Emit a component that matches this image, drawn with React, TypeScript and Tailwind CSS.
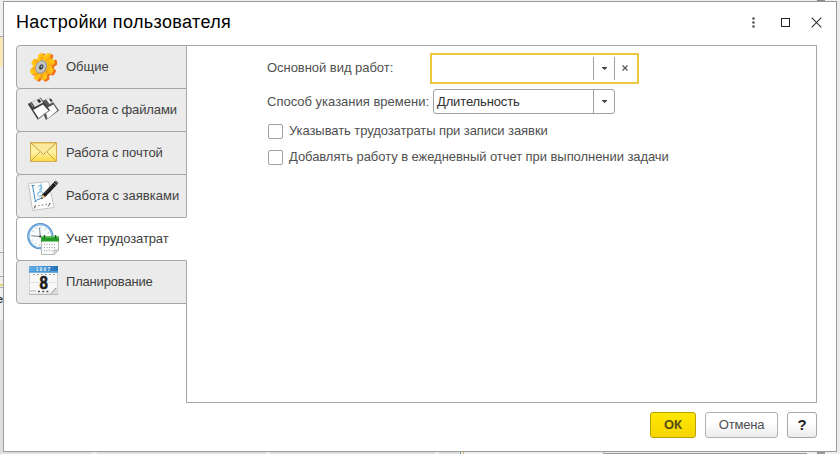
import type { ReactNode } from "react";

const GEAR_TEETH = [0, 45, 90, 135, 180, 225, 270, 315];

function GearIcon() {
  return (
    <svg width="32" height="34" viewBox="0 0 32 34">
      <defs>
        <linearGradient id="gear" x1="0" y1="0" x2="1" y2="1">
          <stop offset="0" stopColor="#ffd51c" />
          <stop offset="0.6" stopColor="#fdb913" />
          <stop offset="1" stopColor="#f68a1e" />
        </linearGradient>
      </defs>
      <g transform="translate(17.6 17.6) rotate(28) scale(0.82 1.05)" fill="#f0701c">
        <circle r="11.2" />
        {GEAR_TEETH.map((a) => (
          <rect key={a} x="-3.1" y="-14.4" width="6.2" height="7" rx="1.6" transform={`rotate(${a})`} />
        ))}
      </g>
      <g transform="translate(15.4 16.6) rotate(28) scale(0.82 1.05)" fill="url(#gear)">
        <circle r="11.4" />
        {GEAR_TEETH.map((a) => (
          <rect key={a} x="-3" y="-14" width="6" height="7" rx="1.6" transform={`rotate(${a})`} />
        ))}
      </g>
      <ellipse cx="14.2" cy="17" rx="5.6" ry="7.2" transform="rotate(28 14.2 17)" fill="#9b9c98" />
      <ellipse cx="13.8" cy="16.8" rx="4.6" ry="6.1" transform="rotate(28 13.8 16.8)" fill="#c3c4c0" />
      <ellipse cx="14.2" cy="17" rx="2" ry="2.8" transform="rotate(28 14.2 17)" fill="#444b50" />
      <circle cx="14.6" cy="16.5" r="0.7" fill="#b8d0dd" />
    </svg>
  );
}

function FloppyIcon() {
  return (
    <svg width="32" height="34" viewBox="0 0 32 34">
      <path d="M11 10 23 4.5 32 17.5 19 27Z" fill="#57585a" />
      <path d="M19 6.2 24 4.2 27 8.5 22.5 11Z" fill="#f4f4f4" />
      <path d="M22 6.3 24 5.4 25.7 8.2 24 9Z" fill="#333" />
      <path d="M18 16 26.5 11.5 30.4 17.6 20.5 25.8Z" fill="#fafafa" />
      <path d="M0.8 11 13.5 4.4 23 17.3 10.8 26.8Z" fill="#3d3e40" />
      <path d="M4.7 9 12.8 4.8 16.2 9.5 7.8 14Z" fill="#e3e3e3" />
      <path d="M10 7.2 12.2 6 14.2 8.8 12 10Z" fill="#292929" />
      <path d="M6.2 17 16 11.6 21.6 17.8 11.8 25.2Z" fill="#fff" />
      <path d="m3.8 10.2 2.5 4M11 25.8 22 17.4" stroke="#97989a" fill="none" />
    </svg>
  );
}

function MailIcon() {
  return (
    <svg width="32" height="34" viewBox="0 0 32 34">
      <defs>
        <linearGradient id="mail" x1="0" y1="0" x2="0" y2="1">
          <stop offset="0" stopColor="#fbe78a" />
          <stop offset="0.5" stopColor="#fff2a5" />
          <stop offset="1" stopColor="#f9d93f" />
        </linearGradient>
      </defs>
      <rect x="3.5" y="6.5" width="26" height="19" fill="url(#mail)" stroke="#d3ac55" />
      <path d="M4 25 13.5 15.5M29 25 19.5 15.5" stroke="#cfa652" fill="none" />
      <path d="M4 7 16.5 18.5 29 7" fill="#fcea9c" stroke="#c69c48" />
      <path d="M5 7.5H28" stroke="#efd06d" />
    </svg>
  );
}

function DocumentIcon() {
  return (
    <svg width="32" height="34" viewBox="0 0 32 34">
      <path d="M1.5 4.5 21.5 2.5 27 28.5 5.5 31.5Z" fill="#fdfdfd" stroke="#c3c5c7" />
      <path d="M5.5 6.5 8.5 22.5M4.5 6.5h3M7.5 22.5 10 22M10 21l5-2" stroke="#3c8bc7" fill="none" />
      <path d="M14 4.5v8M11 7.5c4-3 6 3 1 3M11 14.5c3-4 8 0 3 2.5-4 1-5-3-1-4.5" stroke="#69b2df" fill="none" />
      <path d="m7.5 27.5 16-3" stroke="#777" strokeDasharray="1.5 2.2" fill="none" />
      <path d="m7.5 29.5.8-3M21 27.5l2-3" stroke="#555" />
      <path d="m14.5 19.5.8-4L28.5 1.5l3 2.5L18.5 17.8Z" fill="#191919" />
      <path d="m14.5 20 1-4.5 3 2.5Z" fill="#ecc486" />
      <path d="m14.3 20.3.5-2.1 1.1 1Z" fill="#151515" />
      <path d="m26.6 3.7 3 2.5M28 2.3l3 2.5" stroke="#b9b9b9" strokeWidth="0.8" />
      <path d="m18 14.5 8-8.5" stroke="#747474" strokeWidth="0.6" />
    </svg>
  );
}

function ClockIcon() {
  return (
    <svg width="32" height="34" viewBox="0 0 32 34">
      <circle cx="13.3" cy="14.2" r="12" fill="#f7fafc" stroke="#4b8bc8" strokeWidth="2.2" />
      <circle cx="13.3" cy="14.2" r="11.9" fill="none" stroke="#a4d1f3" strokeWidth="0.8" />
      <circle cx="13.3" cy="14.2" r="9" fill="none" stroke="#b3bcc3" strokeWidth="1.2" strokeDasharray="1 3.71" />
      <path d="M4.8 13.8 13.3 14.5 12.5 5.5M13.3 14.5l5 3" stroke="#5b636a" strokeWidth="0.8" fill="none" />
      <circle cx="13.3" cy="14.4" r="1.2" fill="#555" />
      <path d="M14.5 15.5h17v12.5l-4.5 4.5H14.5Z" fill="#fafafa" stroke="#b5b8b3" />
      <path d="M14 14.5h18v5H14Z" fill="#239b29" />
      <path d="M14 14.5h18v1.3H14Z" fill="#5dbd4d" />
      <path d="M17.5 13v3.5M28.5 13v3.5" stroke="#156d1c" strokeWidth="1.5" />
      <path d="M17 22.5h12M17 25.5h12M17 28.5h9" stroke="#a4a8ab" strokeDasharray="1 1.5" />
      <path d="M27 32.5v-4.5h4.5Z" fill="#dfe0df" stroke="#aaa" strokeWidth="0.7" />
    </svg>
  );
}

function CalendarIcon() {
  return (
    <svg width="32" height="34" viewBox="0 0 32 34">
      <defs>
        <linearGradient id="calendar" x1="0" x2="1">
          <stop offset="0" stopColor="#62afe5" />
          <stop offset="1" stopColor="#2471b9" />
        </linearGradient>
      </defs>
      <path d="M2.5 4h28v25h-28Z" fill="#f8f8f7" stroke="#d1d2d2" />
      <path d="M2 1h29v6.5H2Z" fill="url(#calendar)" />
      <path d="M2 6h29v1.5H2Z" fill="#4a9ad4" />
      <text x="16.5" y="5.6" textAnchor="middle" fontFamily="Liberation Sans" fontSize="5" fontWeight="bold" letterSpacing="1.1" fill="#e7f5ff">1997</text>
      <path d="M6 9.5h22" stroke="#868b8e" strokeDasharray="1.5 2.5" />
      <path d="M3 17.5h27" stroke="#e2e3e3" />
      <g transform="translate(16.6 24) scale(0.86 1)">
        <text textAnchor="middle" fontFamily="Liberation Sans" fontSize="17.5" fontWeight="bold" fill="#1c1c1c" stroke="#1c1c1c" strokeWidth="0.6">8</text>
      </g>
      <path d="M11 26.5h12" stroke="#4b4b4b" strokeWidth="1.4" strokeDasharray="2 2.2" />
      <path d="M3 25h6v2H3Z" fill="#d2d3d4" />
      <path d="m24 29 6.5-6.5V29Z" fill="#d9dada" />
      <path d="m24 28.5 5-5.5" stroke="#8c8e90" />
      <path d="M2 29.5h29" stroke="#b7bbbf" />
    </svg>
  );
}

type TabItem = { label: string; icon: ReactNode; active?: boolean; spacing: string };

const TABS: TabItem[] = [
  { label: "Общие", icon: <GearIcon />, spacing: "tracking-normal" },
  { label: "Работа с файлами", icon: <FloppyIcon />, spacing: "tracking-[-0.12px]" },
  { label: "Работа с почтой", icon: <MailIcon />, spacing: "tracking-[-0.06px]" },
  { label: "Работа с заявками", icon: <DocumentIcon />, spacing: "tracking-normal" },
  { label: "Учет трудозатрат", icon: <ClockIcon />, active: true, spacing: "tracking-[-0.1px]" },
  { label: "Планирование", icon: <CalendarIcon />, spacing: "tracking-[-0.18px]" },
];

function Tab({ label, icon, active, spacing }: TabItem) {
  return (
    <button
      className={
        "relative -mb-px flex h-[44px] items-center rounded-l-[4px] border border-[#a6a6a6] pl-[10px] text-left text-[#404040] " +
        (active ? "z-10 border-r-white bg-white" : "bg-[#ebebeb]")
      }
    >
      <span className="h-[34px] w-8 shrink-0">{icon}</span>
      <span className={"ml-[7px] whitespace-nowrap " + spacing}>{label}</span>
    </button>
  );
}

function Caret() {
  return (
    <svg width="5" height="3" viewBox="0 0 5 3">
      <path d="M0 0h5v.7L2.5 3 0 .7Z" fill="#444" />
    </svg>
  );
}

function CheckRow({ label, spacing }: { label: string; spacing: string }) {
  return (
    <label className="flex h-[26px] items-center">
      <span className="ml-px h-[15px] w-[15px] rounded-[2px] border border-[#a0a0a0] bg-white" />
      <span className={"ml-[6px] whitespace-nowrap " + spacing}>{label}</span>
    </label>
  );
}

function LeftStrip() {
  return (
    <div className="flex flex-col overflow-hidden bg-[#eeeeee] text-[11px] font-bold text-[#333]">
      <div className="h-[35px]" />
      <div className="h-px bg-[#aaa]" />
      <div className="h-[30px] bg-[#f8e8b4]" />
      <div className="h-[185px]" />
      <div className="h-px bg-[#aaa]" />
      <div className="h-[23px]" />
      <div className="h-px bg-[#aaa]" />
      <div className="h-[7px]" />
      <div className="h-[2px] bg-[#e3d679]" />
      <div className="h-px" />
      <div className="h-px bg-[#aaa]" />
      <div className="flex h-[32px] items-start justify-end pt-[4px] leading-[14px]">е</div>
      <div className="flex-1 bg-[#dedede]" />
    </div>
  );
}

export default function App() {
  return (
    <div className="grid h-[454px] w-[840px] grid-cols-[3px_834px_3px] grid-rows-[1px_451px_2px] overflow-hidden bg-[#eeeeee] font-['Liberation_Sans',Arial,sans-serif] text-[13px] leading-[16px] text-[#505050]">
      <div className="col-span-3 flex justify-end pr-[15px]">
        <div className="w-2 bg-[#888]" />
      </div>
      <LeftStrip />
      <main className="flex flex-col border border-[#9b9b9b] bg-white">
        <header className="flex h-[43px] items-center justify-between pl-3 pr-[14px]">
          <h1 className="mt-[-3px] whitespace-nowrap text-[18px] leading-[22px] tracking-[0.36px] text-black">Настройки пользователя</h1>
          <div className="mt-[-2px] flex items-center text-[#333]">
            <svg width="5" height="13" viewBox="0 0 5 13" fill="#555">
              <circle cx="2.5" cy="2.5" r="1.3" />
              <circle cx="2.5" cy="6.5" r="1.3" />
              <circle cx="2.5" cy="10.5" r="1.3" />
            </svg>
            <span className="ml-[25px] h-[9px] w-[9px] border border-[#222]" />
            <svg className="ml-[21px]" width="11" height="11" viewBox="0 0 11 11" stroke="#333" strokeWidth="1.1">
              <path d="M.7.7 10.3 10.3M10.3.7.7 10.3" />
            </svg>
          </div>
        </header>
        <div className="flex h-[358px] pl-3">
          <nav className="relative z-10 -mr-px flex w-[171px] flex-col">
            {TABS.map((tab) => (
              <Tab key={tab.label} {...tab} />
            ))}
          </nav>
          <section className="w-[631px] border border-[#a6a6a6] pl-20">
            <div className="mt-[6px] flex h-[32px] items-center">
              <span className="w-[163px] whitespace-nowrap tracking-[-0.04px]">Основной вид работ:</span>
              <div className="flex h-[31px] w-[209px] items-center border-2 border-[#e9c83f]">
                <div className="h-[23px] flex-1" />
                <div className="flex h-[23px] w-[21px] items-center justify-center border-l border-[#a0a0a0]"><Caret /></div>
                <div className="flex h-[23px] w-[23px] items-center border-l border-[#a0a0a0] pl-[7px]">
                  <svg width="6" height="6" viewBox="0 0 6 6" stroke="#555" strokeWidth="1.2"><path d="m.5.5 5 5m0-5-5 5" /></svg>
                </div>
              </div>
            </div>
            <div className="mt-[5px] flex h-[25px] items-center">
              <span className="w-[166px] whitespace-nowrap">Способ указания времени:</span>
              <div className="flex h-[25px] w-[182px] items-center rounded-[3px] border border-[#a0a0a0]">
                <span className="flex-1 pl-[3px] tracking-[-0.14px] text-[#303030]">Длительность</span>
                <div className="flex h-full w-[21px] items-center justify-center border-l border-[#a0a0a0]"><Caret /></div>
              </div>
            </div>
            <div className="mt-[4px]">
              <CheckRow label="Указывать трудозатраты при записи заявки" spacing="tracking-[-0.08px]" />
              <CheckRow label="Добавлять работу в ежедневный отчет при выполнении задачи" spacing="tracking-[-0.06px]" />
            </div>
          </section>
        </div>
        <footer className="mt-[9px] flex h-[26px] justify-end gap-[9px] pr-[19px]">
          <button className="w-[46px] rounded-[3px] border border-[#b7a000] bg-linear-to-b from-[#ffe800] to-[#f6d500] font-bold text-[#554c16]">ОК</button>
          <button className="w-[73px] rounded-[3px] border border-[#b1b1b1] bg-linear-to-b from-white from-40% to-[#ececec] tracking-[-0.2px]">Отмена</button>
          <button className="w-[30px] rounded-[3px] border border-[#a8a8a8] bg-linear-to-b from-white from-40% to-[#ececec] text-[15px] font-bold text-[#222]">?</button>
        </footer>
      </main>
      <div className="bg-[#ececec]" />
      <div className="col-span-3 flex bg-[#eeeeee]">
        <div className="w-[92px] bg-[#dedede]" />
        <div className="ml-[5px] w-[169px] bg-[#dedede]" />
        <div className="ml-[4px] w-[165px] bg-[#dedede]" />
        <div className="ml-[4px] w-[21px] bg-[#dedede]" />
        <div className="w-px bg-[#719b91]" />
        <div className="ml-[2px] w-px bg-[#d5ae4d]" />
        <div className="ml-[139px] h-[2px] w-[204px] rounded-bl-[2px] border-b border-l border-[#999]" />
        <div className="ml-[10px] w-2 bg-[#999]" />
      </div>
    </div>
  );
}
